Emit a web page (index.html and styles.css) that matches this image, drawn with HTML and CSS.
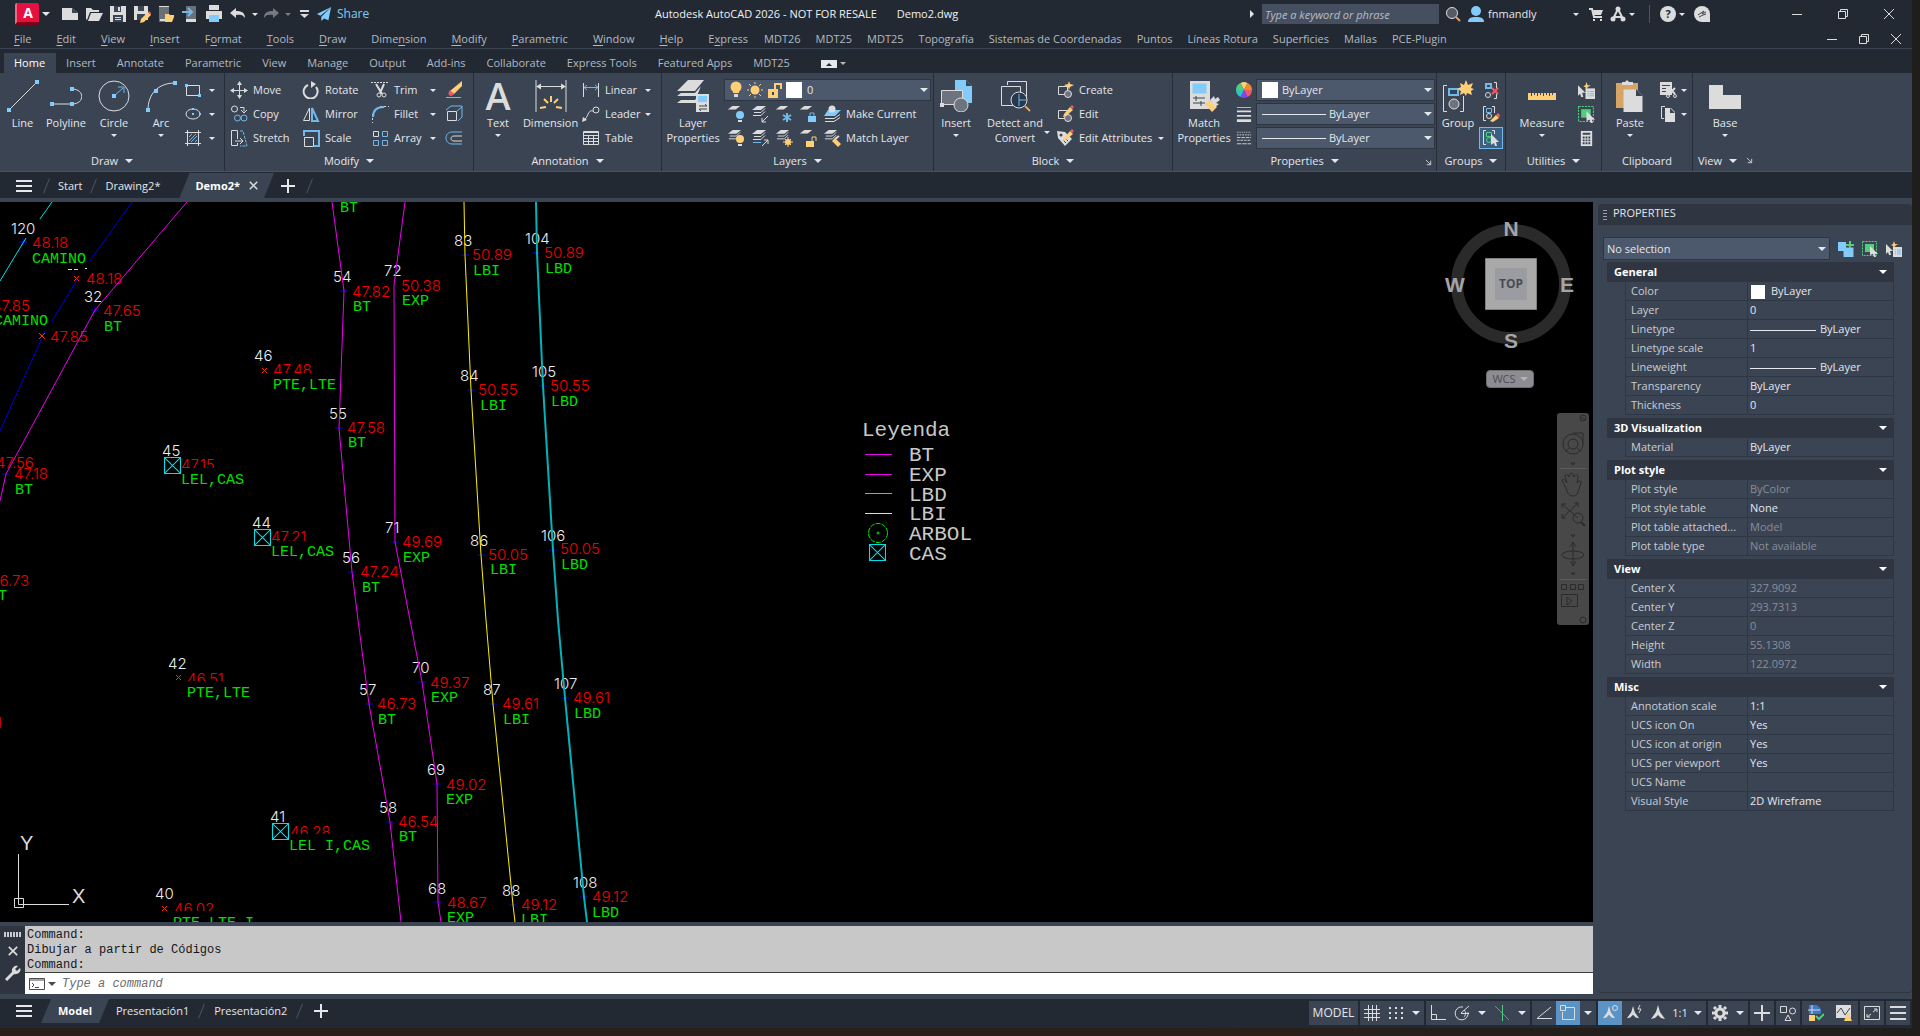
FILE: index.html
```html
<!DOCTYPE html>
<html lang="en">
<head>
    <meta charset="UTF-8">
    <meta name="viewport" content="width=device-width, initial-scale=1.0">
    <title>Autodesk AutoCAD 2026 - Demo2.dwg</title>
    <link rel="stylesheet" href="styles.css">
</head>
<body>
<!-- shared icons -->
<svg class="sprite" aria-hidden="true">
    <symbol id="sheets" viewBox="0 0 16 16"><path class="fw" d="M6 1h9l-5 4H1z"/><path d="M3 7.500h7l4-4M2 10.500h8l4-4"/></symbol>
    <symbol id="sheet" viewBox="0 0 16 16"><path class="fw" d="M6 1h9l-5 4H1z"/></symbol>
    <symbol id="cas" viewBox="0 0 16 16"><path d="M.5.5h15v15H.5zM.5.5l15 15M15.500.5l-15 15"/></symbol>
    <symbol id="qselect" viewBox="0 0 16 16"><path class="fy" d="M8 0l1 3 3 0-3 2-1 3-1-3-2-1 2-1z"/><path class="fw" d="M0 3l7 7H4l1 4-2 0-1-3-2 2z"/><path class="fw" d="M7 6h9v10H7z"/><path class="b" d="M9 9h1m1 0h4M9 11h1m1 0h4M9 13h1m1 0h4"/></symbol>
    <symbol id="gselect" viewBox="0 0 16 16"><path class="g" stroke-dasharray="2 1" d="M.5.5h14v14H.5z"/><path class="fg" d="M3 3h9v8H3z"/><path class="fw" d="M8 5l8 8h-3l1 3-2 0-1-3-3 1z"/></symbol>
    <symbol id="restore" viewBox="0 0 12 12"><path d="M1.500 3.500h7v7h-7zM3.500 3V1.500h7v7H9"/></symbol>
    <symbol id="close" viewBox="0 0 12 12"><path d="M1 1l10 10M11 1L1 11"/></symbol>
    <symbol id="scaleman" viewBox="0 0 16 16"><path class="fw" d="M8 0l2 7 5 7-4-1-3-3-3 3-4 1 5-7z"/></symbol>
</svg>

<div class="app">
    <header class="titlebar">
        <div class="qat">
            <button class="logo" aria-label="Application menu">A</button><i class="caret"></i>
            <button class="qa" aria-label="New"><svg viewBox="0 0 18 18"><path class="fw" d="M1 3h10l6 5v7H1z"/><path class="fd" d="M11 3v5h6z"/></svg></button>
            <button class="qa" aria-label="Open"><svg viewBox="0 0 18 18"><path class="fw" d="M1 14V3h5l2 2h6v2H5l-3 8z"/><path class="fw" d="M6 8h12l-4 8H3z"/></svg></button>
            <button class="qa" aria-label="Save"><svg viewBox="0 0 18 18"><path class="fw" d="M1 1h16v16H1z"/><path class="fd" d="M5 1h7v6H5zM4 10h10v7H4z"/><path class="fw" d="M9 2h2v4H9zM6 12h6v1H6zm0 2h6v1H6z"/></svg></button>
            <button class="qa" aria-label="Save as"><svg viewBox="0 0 18 18"><path class="fw" d="M1 1h14v14H1z"/><path class="fd" d="M5 1h6v5H5zM4 9h8v6H4z"/><path class="fy" d="M8 14l7-7 3 3-7 7-4 1z"/><path class="fr" d="M15 7l1-1 2 2v2z"/></svg></button>
            <button class="qa" aria-label="Open from web"><svg viewBox="0 0 18 18"><path class="fgr" d="M2 1h10v16H2z"/><path class="fw" d="M3 14h6v2H3zM2 1h10v1H2z"/><path class="fy" d="M8 9h4l1 1h4v2l-2 5H8z"/></svg></button>
            <button class="qa" aria-label="Save to web"><svg viewBox="0 0 18 18"><path class="fgr" d="M5 1h10v16H5z"/><path class="fw" d="M5 14h10v3H5z"/><path class="b w2" d="M1 7h9M7 3l4 4-4 4"/></svg></button>
            <button class="qa" aria-label="Plot"><svg viewBox="0 0 18 18"><path class="fw" d="M4 0h10v5H4zM1 6h16v8H1z"/><path class="fb" d="M4 10h10v7H4z"/></svg></button>
            <button class="qa" aria-label="Undo"><svg viewBox="0 0 18 18"><path class="fw" d="M1 8l6-5v3c5 0 9 1 9 7-2-3-4-4-9-3v3z"/></svg></button><i class="caret small"></i>
            <button class="qa dim" aria-label="Redo"><svg viewBox="0 0 18 18"><path class="fw" d="M17 8l-6-5v3c-5 0-9 1-9 7 2-3 4-4 9-3v3z"/></svg></button><i class="caret small"></i>
            <button class="qa" aria-label="Customize"><svg viewBox="0 0 18 18"><path class="fw" d="M5 5h9v2H5zm0 4h9l-4.500 4z"/></svg></button>
            <a class="share" href="#"><svg viewBox="0 0 18 18"><path class="fb" d="M17 1L1 9l4 2zM17 1L6 12v5l3-3 5 2z"/></svg>Share</a>
        </div>
        <div class="window-title"><span>Autodesk AutoCAD 2026 - NOT FOR RESALE</span><span>Demo2.dwg</span></div>
        <div class="infocenter">
            <i class="caret-right"></i>
            <input class="search" type="text" aria-label="Search" placeholder="Type a keyword or phrase">
            <button class="i16" aria-label="Find"><svg viewBox="0 0 16 16"><circle cx="7" cy="7" r="5.500" fill="#555b65"/><path class="w2" stroke="#dba36b" d="M11 11l4 4"/></svg></button>
            <a class="user" href="#"><svg viewBox="0 0 16 16"><circle class="fb" cx="8" cy="5" r="5"/><path class="fb" d="M0 16c0-4 3-5 8-5s8 1 8 5z"/></svg>fnmandly</a><i class="caret small"></i>
            <button class="i16" aria-label="Store"><svg viewBox="0 0 16 16"><path class="w2" d="M1 3h3l2 8h8"/><path class="fw" d="M5 4h10l-2 5H6zM5 13h2v2H5zm7 0h2v2h-2z"/></svg></button>
            <button class="i16" aria-label="Apps"><svg viewBox="0 0 16 16"><path class="w2" d="M8 3L3 13M8 3l5 10M4 11h8"/><circle class="fw" cx="8" cy="3" r="2.500"/><circle class="fw" cx="3" cy="13" r="2.500"/><circle class="fw" cx="13" cy="13" r="2.500"/></svg></button><i class="caret small"></i>
            <span class="sep"></span>
            <button class="help" aria-label="Help">?</button><i class="caret small"></i>
            <button class="i16" aria-label="Assistant"><svg viewBox="0 0 16 16"><path class="fw" d="M8 0a8 8 0 0 1 8 8v8H8A8 8 0 0 1 8 0z"/><path class="dk" d="M4 9l6-4-2 3 4-2M5 11l4-2 3-1"/></svg></button>
        </div>
        <div class="win-buttons">
            <button aria-label="Minimize"><svg viewBox="0 0 12 12"><path d="M1 6.500h10"/></svg></button>
            <button aria-label="Restore"><svg><use href="#restore"/></svg></button>
            <button aria-label="Close"><svg><use href="#close"/></svg></button>
        </div>
    </header>

    <nav class="menubar">
        <div class="menus">
            <a href="#"><u>F</u>ile</a><a href="#"><u>E</u>dit</a><a href="#"><u>V</u>iew</a><a href="#"><u>I</u>nsert</a><a href="#">F<u>o</u>rmat</a><a href="#"><u>T</u>ools</a><a href="#"><u>D</u>raw</a><a href="#">Dime<u>n</u>sion</a><a href="#"><u>M</u>odify</a><a href="#"><u>P</u>arametric</a><a href="#"><u>W</u>indow</a><a href="#"><u>H</u>elp</a><a href="#">E<u>x</u>press</a>
        </div>
        <div class="menus plugins">
            <a href="#">MDT26</a><a href="#">MDT25</a><a href="#">MDT25</a><a href="#">Topografía</a><a href="#">Sistemas de Coordenadas</a><a href="#">Puntos</a><a href="#">Líneas Rotura</a><a href="#">Superficies</a><a href="#">Mallas</a><a href="#">PCE-Plugin</a>
        </div>
        <div class="win-buttons mdi">
            <button aria-label="Minimize drawing"><svg viewBox="0 0 12 12"><path d="M1 6.500h10"/></svg></button>
            <button aria-label="Restore drawing"><svg><use href="#restore"/></svg></button>
            <button aria-label="Close drawing"><svg><use href="#close"/></svg></button>
        </div>
    </nav>

    <nav class="ribbon-tabs">
        <button class="active">Home</button><button>Insert</button><button>Annotate</button><button>Parametric</button><button>View</button><button>Manage</button><button>Output</button><button>Add-ins</button><button>Collaborate</button><button>Express Tools</button><button>Featured Apps</button><button>MDT25</button>
        <button class="ribbon-min" aria-label="Minimize ribbon"></button><i class="caret small"></i>
    </nav>

    <section class="ribbon">
        <div class="panel draw">
            <div class="tools">
                <button class="big"><svg viewBox="0 0 32 32"><path d="M2 30L30 2"/><path class="fb" d="M0 28h4v4H0zM28 0h4v4h-4z"/></svg>Line</button>
                <button class="big"><svg viewBox="0 0 32 32"><path d="M1 24h21c13 0 13-15 0-15"/><path class="fb" d="M0 22h4v4H0zM20 22h4v4h-4zM20 7h4v4h-4z"/></svg>Polyline</button>
                <button class="big"><svg viewBox="0 0 32 32"><circle cx="16" cy="16" r="15"/><path class="b" d="M16 16l9-8M20 7h6v6"/><path class="fb" d="M14 14h4v4h-4z"/></svg>Circle<i class="caret small"></i></button>
                <button class="big"><svg viewBox="0 0 32 32"><path d="M3 30C3 14 13 3 30 3"/><path class="fb" d="M1 28h4v4H1zM28 1h4v4h-4zM9 9h4v4H9z"/></svg>Arc<i class="caret small"></i></button>
                <div class="rows">
                    <button class="tool" aria-label="Rectangle"><svg viewBox="0 0 18 18"><path d="M2.500 4.500h13v10h-13z"/><path class="fb" d="M1 3h3v3H1zM14 13h3v3h-3z"/></svg><i class="caret small"></i></button>
                    <button class="tool" aria-label="Ellipse"><svg viewBox="0 0 18 18"><ellipse cx="9" cy="9" rx="7" ry="5"/><path class="fb" d="M8 8h2v2H8zM15 8h2v2h-2zM8 3h2v2H8z"/></svg><i class="caret small"></i></button>
                    <button class="tool" aria-label="Hatch"><svg viewBox="0 0 18 18"><path d="M3.500 1v16M14.500 1v16M1 3.500h16M1 14.500h16"/><path class="b" d="M5 8l3-3M5 12l7-7M7 13l6-6M11 13l2-2"/></svg><i class="caret small"></i></button>
                </div>
            </div>
            <button class="panel-title">Draw<i class="caret"></i></button>
        </div>

        <div class="panel modify">
            <div class="tools">
                <div class="rows">
                    <button class="tool"><svg viewBox="0 0 18 18"><path d="M9.500 2v14M2 9.500h14"/><path class="fw" d="M7 4l2.500-4L12 4zM7 14l2.500 4 2.500-4zM4 7L0 9.500 4 12zM14 7l4 2.500-4 2.500z"/></svg>Move</button>
                    <button class="tool"><svg viewBox="0 0 18 18"><circle cx="4.500" cy="4" r="3"/><path d="M10 2.500h4v4M11 5l3 3 3-3"/><circle class="b" cx="7.500" cy="13" r="3"/><circle class="b" cx="14" cy="13" r="3"/></svg>Copy</button>
                    <button class="tool"><svg viewBox="0 0 18 18"><path d="M7.500 10V1.500h-6v15h6V14M5 12h7M10 9l3 3-3 3"/><path class="b" d="M10 2h3l4 15h-7" stroke-dasharray="3 1"/></svg>Stretch</button>
                </div>
                <div class="rows">
                    <button class="tool"><svg viewBox="0 0 18 18"><path class="w2" d="M6 4a7 7 0 1 0 8 2"/><path class="fw" d="M9 0l5 3-5 4z"/></svg>Rotate</button>
                    <button class="tool"><svg viewBox="0 0 18 18"><path d="M1.500 15.500h6V3z"/><path class="b w2" d="M10 3v13h6z"/></svg>Mirror</button>
                    <button class="tool"><svg viewBox="0 0 18 18"><path class="b w2" d="M2 7V2h15v15h-5"/><path d="M2.500 8.500h9v9h-9z"/></svg>Scale</button>
                </div>
                <div class="rows">
                    <button class="tool"><svg viewBox="0 0 18 18"><path stroke-dasharray="2 1" d="M0 1.500h18"/><path class="w2" d="M5 3l6 10M13 3L9 12"/><circle cx="8" cy="14" r="2"/><circle cx="13" cy="14" r="2"/></svg>Trim<i class="caret small"></i></button>
                    <button class="tool"><svg viewBox="0 0 18 18"><path stroke-dasharray="2 2" d="M9 1.500h9M1.500 9v9"/><path class="b w2" d="M2 12C2 5 6 2 13 2"/></svg>Fillet<i class="caret small"></i></button>
                    <button class="tool"><svg viewBox="0 0 18 18"><path d="M2.500 2.500h5v5h-5z"/><path class="b" d="M11.500 2.500h5v5h-5zM2.500 11.500h5v5h-5zM11.500 11.500h5v5h-5z"/></svg>Array<i class="caret small"></i></button>
                </div>
                <div class="rows">
                    <button class="tool" aria-label="Erase"><svg viewBox="0 0 18 18"><path class="fy" d="M17 0v5l-8 8-4-3z"/><path class="fr" d="M5 9l4 4c-3 4-8 1-4-4z"/><path class="b" d="M1 16.500h15"/></svg></button>
                    <button class="tool" aria-label="Explode"><svg viewBox="0 0 18 18"><path d="M2.500 6.500h9v9h-9z"/><path class="b" d="M1 5l5-4h11v11l-4 4M12 6l5-4"/></svg></button>
                    <button class="tool" aria-label="Offset"><svg viewBox="0 0 18 18"><path d="M17 7H9c-4 0-4 5 0 5h8"/><path class="b" d="M17 3H7c-8 0-8 12 0 12h10"/></svg></button>
                </div>
            </div>
            <button class="panel-title">Modify<i class="caret"></i></button>
        </div>

        <div class="panel annotation">
            <div class="tools">
                <button class="big"><span class="big-a">A</span>Text<i class="caret small"></i></button>
                <button class="big"><svg viewBox="0 0 32 32"><path d="M1 0v32M31 0v32M2 6.500h28"/><path class="fw" d="M1 6.500l5-3v6zM31 6.500l-5-3v6z"/><path class="y w2" d="M5 28l6-1M9 19l4 4M16 16v6M23 19l-4 4M27 28l-6-1"/></svg>Dimension</button>
                <div class="rows">
                    <button class="tool"><svg viewBox="0 0 18 18"><path d="M1.500 2v14M16.500 2v14"/><path class="b" d="M2 6.500h14M5 4L2 6.500 5 9M13 4l3 2.500L13 9"/></svg>Linear<i class="caret small"></i></button>
                    <button class="tool"><svg viewBox="0 0 18 18"><circle cx="14" cy="5" r="3"/><path d="M11 6c-5-2-5 7-9 9"/><path class="fw" d="M0 17l1-5 4 3z"/></svg>Leader<i class="caret small"></i></button>
                    <button class="tool"><svg viewBox="0 0 18 18"><path d="M1.500 2.500h15v13h-15zM1 3.500h16M1 6.500h16M1 9.500h16M1 12.500h16M6.500 6v10M11.500 6v10"/></svg>Table</button>
                </div>
            </div>
            <button class="panel-title">Annotation<i class="caret"></i></button>
        </div>

        <div class="panel layers">
            <div class="tools">
                <button class="big"><svg viewBox="0 0 32 32"><path class="fw" d="M11 0h16l-9 11H0zM4 13h14l6-7-4 10H0zM4 20h14l3-4v7H0z"/><path class="fw" d="M19 14h13v18H19z"/><path class="fb" d="M21 16h9v6h-9z"/><path class="dk" d="M22 26h8l-2-2M30 29h-8l2 2"/></svg>Layer<br>Properties</button>
                <div class="layer-side">
                    <div class="combo layer-combo">
                        <svg viewBox="0 0 18 18"><circle class="fy" cx="9" cy="6" r="5.500"/><path class="fy" d="M6 9h6v3H6z"/><path class="fw" d="M7 13h4v3H7z"/></svg>
                        <svg viewBox="0 0 18 18"><circle class="fy" cx="9" cy="9" r="4.500"/><path class="y" d="M9 1v2M9 15v2M1 9h2M15 9h2M3 3l2 2M13 13l2 2M15 3l-2 2M3 15l2-2"/></svg>
                        <svg viewBox="0 0 18 18"><path class="fy" d="M3 8h10v9H3z"/><path class="y w2" d="M10 8V3h6v5"/><path class="fd" d="M7 11h2v3H7z"/></svg>
                        <span class="swatch"></span>
                        <select aria-label="Layer"><option>0</option></select>
                    </div>
                    <div class="layer-grid">
                        <button class="tool" aria-label="Layer off"><svg viewBox="0 0 18 18"><use href="#sheet" width="14" height="14"/><circle class="fb" cx="13" cy="10" r="4"/><path class="fw" d="M11 15h4v2h-4z"/></svg></button>
                        <button class="tool" aria-label="Isolate layer"><svg viewBox="0 0 18 18"><use href="#sheets" width="16" height="16"/><path d="M17 11l-6 6M11 13v4h4"/></svg></button>
                        <button class="tool" aria-label="Freeze layer"><svg viewBox="0 0 18 18"><use href="#sheet" width="14" height="14"/><path class="b w2" d="M12 8v9M8 10l8 5M8 15l8-5"/></svg></button>
                        <button class="tool" aria-label="Lock layer"><svg viewBox="0 0 18 18"><use href="#sheet" width="14" height="14"/><path class="fb" d="M9 11h8v6H9z"/><path class="b" d="M11 11V8h4v3"/></svg></button>
                        <button class="tool"><svg viewBox="0 0 18 18"><path class="fb" d="M5 5h13l-6 6H1z"/><circle class="fw" cx="9" cy="4" r="3.500"/><path d="M2 13.500h9l6-4M2 16.500h9l6-4"/></svg>Make Current</button>
                        <button class="tool" aria-label="All layers on"><svg viewBox="0 0 18 18"><use href="#sheets" width="15" height="15"/><circle class="fy" cx="13" cy="10" r="4"/><path class="fw" d="M11 15h4v2h-4z"/></svg></button>
                        <button class="tool" aria-label="Unisolate"><svg viewBox="0 0 18 18"><use href="#sheets" width="16" height="16"/><path class="b" d="M2 13.500h8"/><path d="M11 17l6-6M13 11h4v4"/></svg></button>
                        <button class="tool" aria-label="Thaw layers"><svg viewBox="0 0 18 18"><use href="#sheets" width="15" height="15"/><circle class="fy" cx="13" cy="13" r="3"/><path class="y" d="M13 8v10M8 13h10M10 10l6 6M16 10l-6 6"/></svg></button>
                        <button class="tool" aria-label="Unlock layer"><svg viewBox="0 0 18 18"><use href="#sheet" width="14" height="14"/><path class="fy" d="M7 12h8v6H7z"/><path class="y" d="M13 12V8h4v4"/></svg></button>
                        <button class="tool"><svg viewBox="0 0 18 18"><use href="#sheets" width="15" height="15"/><path class="fy" d="M9 12l3-3 6 6-3 3z"/><path class="w2" d="M12 10l4-3"/></svg>Match Layer</button>
                    </div>
                </div>
            </div>
            <button class="panel-title">Layers<i class="caret"></i></button>
        </div>

        <div class="panel block">
            <div class="tools">
                <button class="big"><svg viewBox="0 0 32 32"><path class="fb" d="M15 0h11l6 6v17H15z"/><path class="fd" d="M26 0v6h6z"/><path fill="#6d7480" d="M1.500 10.500h21v14h-21z"/><circle cx="21" cy="25" r="7" fill="#6d7480"/><path class="fw" d="M0 23h4v4H0z"/></svg>Insert<i class="caret small"></i></button>
                <button class="big detect"><svg viewBox="0 0 32 32"><path d="M8.500 5V1.500h19v19M2.500 6.500h19v19h-19z"/><circle cx="20" cy="20" r="8" fill="#27384d"/><path class="b" d="M20 14v12M20 20h7"/><path class="w2" stroke="#dba36b" d="M26 26l5 5"/></svg>Detect and<br>Convert<i class="caret small"></i></button>
                <div class="rows">
                    <button class="tool"><svg viewBox="0 0 18 18"><path d="M2.500 5.500h9v8h-9z"/><circle cx="12" cy="13" r="3.500" fill="#6d7480"/><path class="fy" d="M13 0l1 3 4 1-4 2-1 3-1-3-4-2 4-1z"/></svg>Create</button>
                    <button class="tool"><svg viewBox="0 0 18 18"><path d="M2.500 5.500h9v8h-9z"/><circle cx="12" cy="13" r="3.500" fill="#6d7480"/><path class="fy" d="M8 9l6-7 3 3-7 6-3 1z"/><path class="fr" d="M14 2l2-2 2 2-2 2z"/></svg>Edit</button>
                    <button class="tool"><svg viewBox="0 0 18 18"><path class="fw" d="M1 2l8 1 7 7-7 7-7-8z"/><circle class="fd" cx="5" cy="6" r="1.500"/><path class="dk" d="M7 11l3 3M9 9l3 3"/><path class="fy" d="M8 9l6-7 3 3-7 6-3 1z"/><path class="fr" d="M14 2l2-2 2 2-2 2z"/></svg>Edit Attributes<i class="caret small"></i></button>
                </div>
            </div>
            <button class="panel-title">Block<i class="caret"></i></button>
        </div>

        <div class="panel props">
            <div class="tools">
                <button class="big"><svg viewBox="0 0 32 32"><path class="fw" d="M2 1h20v28H2z"/><path class="fb" stroke="#2c333f" d="M4.500 3.500h14v10h-14z"/><path class="dk" d="M5 18h12M5 23h12M8 16v5M13 21v5"/><path class="fy" d="M17 24l5-4 7 7-5 5z"/><path class="fw" d="M22 20l4-4 1 3 3-2 2 3-4 3 3 1-4 3z"/></svg>Match<br>Properties</button>
                <div class="prop-combos">
                    <svg viewBox="0 0 18 18"><path class="fy" d="M9 9L5 1a9 9 0 0 1 8 0z"/><path fill="#f58a2c" stroke="none" d="M9 9l4-8a9 9 0 0 1 5 8z"/><path class="fr" d="M9 9h9a9 9 0 0 1-5 8z"/><path fill="#8a3ff0" stroke="none" d="M9 9l4 8a9 9 0 0 1-8 0z"/><path fill="#2cc5c0" stroke="none" d="M9 9l-4 8a9 9 0 0 1-5-8z"/><path class="fg" d="M9 9H0a9 9 0 0 1 5-8z"/></svg>
                    <div class="combo"><span class="swatch"></span><select aria-label="Object color"><option>ByLayer</option></select></div>
                    <svg viewBox="0 0 18 18"><path class="fw" d="M1 1h16v1H1zM1 5h16v2H1zM1 10h16v2H1zM1 15h16v3H1z"/></svg>
                    <div class="combo"><span class="line-sample"></span><select aria-label="Lineweight"><option>ByLayer</option></select></div>
                    <svg viewBox="0 0 18 18"><path stroke-dasharray="1 1" d="M1 2.500h16"/><path stroke-dasharray="2 1" d="M1 5.500h16"/><path stroke-dasharray="4 1" d="M1 8.500h16"/><path stroke-dasharray="3 1" d="M1 11.500h16"/><path stroke-dasharray="5 1" d="M1 15.500h16"/></svg>
                    <div class="combo"><span class="line-sample"></span><select aria-label="Linetype"><option>ByLayer</option></select></div>
                </div>
            </div>
            <button class="panel-title">Properties<i class="caret"></i></button>
            <button class="launcher" aria-label="Properties settings"><svg viewBox="0 0 8 8"><path d="M1 1l5 5M6.500 2v4.500H2"/></svg></button>
        </div>

        <div class="panel groups">
            <div class="tools">
                <button class="big"><svg viewBox="0 0 32 32"><path d="M5 5.500H1.500v26H5M18 31.500h3.500V16"/><path class="b w2" fill="#2c4460" d="M7 9h9v6H7z"/><circle cx="12" cy="24" r="5" fill="#6d7480"/><path class="fy" d="M24 0l2 5 5-2-2 5 3 1-3 2 1 4-5-2-1 3-2-3-4 2 1-4-4-2 4-2-1-4 4 2z"/></svg>Group</button>
                <div class="rows">
                    <button class="tool" aria-label="Ungroup"><svg viewBox="0 0 18 18"><path class="b w2" d="M4 3h5v4H4z"/><circle cx="6" cy="14" r="2.500"/><path d="M12 1.500h2.500v6M14.500 13v4.500H12"/><path class="r w2" d="M10 7l6 6M16 7l-6 6"/></svg></button>
                    <button class="tool" aria-label="Group edit"><svg viewBox="0 0 18 18"><path d="M4 1.500H1.500v14H4M10 1.500h2.500V8"/><path class="b" d="M4.500 3.500h5v4h-5z"/><circle cx="7" cy="11" r="2.500"/><path class="fy" d="M8 16l6-6 3 3-6 4z"/><path class="fr" d="M14 10l2-2 2 2-1 3z"/></svg></button>
                    <button class="tool on" aria-label="Group selection"><svg viewBox="0 0 18 18"><path d="M4 1.500H1.500v14H4M10 1.500h2.500V5"/><path class="g" d="M4.500 3.500h5v4h-5z"/><circle class="g" cx="7" cy="11" r="2.500"/><path class="fw" d="M9 5l8 8h-3l1 4-2 0-1-3-3 2z"/></svg></button>
                </div>
            </div>
            <button class="panel-title">Groups<i class="caret"></i></button>
        </div>

        <div class="panel utilities">
            <div class="tools">
                <button class="big"><svg viewBox="0 0 32 32"><path class="fy" d="M2 13h28v7H2z"/><path class="dk" d="M5.500 13v3M8.500 13v2M11.500 13v3M14.500 13v2M17.500 13v3M20.500 13v2M23.500 13v3M26.500 13v2"/></svg>Measure<i class="caret small"></i></button>
                <div class="rows">
                    <button class="tool" aria-label="Quick select"><svg><use href="#qselect"/></svg></button>
                    <button class="tool" aria-label="Select all"><svg><use href="#gselect"/></svg></button>
                    <button class="tool" aria-label="Calculator"><svg viewBox="0 0 18 18"><path class="fw" d="M3 1h12v16H3z"/><path class="fd" d="M5 3h8v2H5z"/><path class="dk w2" stroke-dasharray="2 1" d="M5 8h8M5 11h8M5 14h8"/></svg></button>
                </div>
            </div>
            <button class="panel-title">Utilities<i class="caret"></i></button>
        </div>

        <div class="panel clipboard">
            <div class="tools">
                <button class="big"><svg viewBox="0 0 32 32"><path fill="#d6a465" stroke="none" d="M2 3h22v25H2z"/><path class="fw" d="M8 2h3l2-2 2 2h4v3H8z"/><path class="fw" stroke="#3b4453" d="M9.500 9.500h13l6 6v17h-19z"/><path class="fd" d="M22 9v7h7z"/></svg>Paste<i class="caret small"></i></button>
                <div class="rows">
                    <button class="tool" aria-label="Cut"><svg viewBox="0 0 18 18"><path class="fw" d="M1 1h12v13H1z"/><path class="dk" d="M3 4.500h8M3 7.500h4M3 10.500h4"/><path class="w2" d="M9 6l7 7M16 7l-7 7"/><circle cx="9" cy="15" r="1.500"/><circle cx="16" cy="15" r="1.500"/></svg><i class="caret small"></i></button>
                    <button class="tool" aria-label="Copy clip"><svg viewBox="0 0 18 18"><path d="M6 1.500H2.500v12H5"/><path class="fw" d="M6 3h6l4 4v10H6z"/><path class="fd" d="M11 3v5h5z"/></svg><i class="caret small"></i></button>
                </div>
            </div>
            <div class="panel-title">Clipboard</div>
        </div>

        <div class="panel view">
            <div class="tools">
                <button class="big"><svg viewBox="0 0 32 32"><path class="fw" d="M0 5h14v10h18v14H0z"/></svg>Base<i class="caret small"></i></button>
            </div>
            <div class="view-foot"><button class="panel-title">View<i class="caret"></i></button>
            <button aria-label="View settings"><svg viewBox="0 0 8 8"><path d="M1 1l5 5M6.500 2v4.500H2"/></svg></button></div>
        </div>
    </section>

    <nav class="file-tabs">
        <button class="burger" aria-label="Drawing list"></button>
        <i class="slash"></i><button class="tab">Start</button>
        <i class="slash"></i><button class="tab">Drawing2*</button>
        <button class="tab current">Demo2*<svg><use href="#close"/></svg></button>
        <button class="plus" aria-label="New drawing"></button><i class="slash"></i>
    </nav>

    <main class="workspace">
        <div class="editor">
            <div class="canvas">
                <svg class="drawing">
                    <!-- survey drawing, y axis starts below the ribbon -->
                    <g transform="translate(0 -202)">
                        <g class="nums">
                            <text x="11" y="234">120</text><text x="84" y="302">32</text><text x="254" y="361">46</text><text x="162" y="456">45</text><text x="252" y="528">44</text><text x="168" y="669">42</text><text x="270" y="822">41</text><text x="155" y="899">40</text>
                            <text x="454" y="246">83</text><text x="525" y="244">104</text><text x="333" y="282">54</text><text x="384" y="276">72</text><text x="460" y="381">84</text><text x="532" y="377">105</text><text x="329" y="419">55</text><text x="385" y="533">71</text><text x="470" y="546">86</text><text x="541" y="541">106</text><text x="342" y="563">56</text>
                            <text x="359" y="695">57</text><text x="412" y="673">70</text><text x="483" y="695">87</text><text x="554" y="689">107</text><text x="427" y="775">69</text><text x="379" y="813">58</text><text x="428" y="894">68</text><text x="502" y="896">88</text><text x="573" y="888">108</text>
                        </g>
                        <path class="tick" d="M68 269.500h4m2 0h4m7-1h2"/>
                        <g class="elev">
                            <text x="32" y="248">48.18</text><text x="86" y="284">48.18</text><text x="-8" y="311">47.85</text><text x="103" y="316">47.65</text><text x="50" y="342">47.85</text><text x="-4" y="468">47.56</text><text x="14" y="479">47.18</text><text x="273" y="375">47.48</text><text x="181" y="470">47.15</text><text x="271" y="542">47.21</text><text x="-10" y="586">46.73</text><text x="-35" y="728">46.81</text><text x="187" y="684">46.51</text><text x="290" y="837">46.28</text><text x="174" y="914">46.02</text>
                            <text x="472" y="260">50.89</text><text x="544" y="258">50.89</text><text x="352" y="297">47.82</text><text x="401" y="291">50.38</text><text x="478" y="395">50.55</text><text x="550" y="391">50.55</text><text x="347" y="433">47.58</text><text x="402" y="547">49.69</text><text x="488" y="560">50.05</text><text x="560" y="554">50.05</text><text x="360" y="577">47.24</text>
                            <text x="430" y="688">49.37</text><text x="377" y="709">46.73</text><text x="502" y="709">49.61</text><text x="573" y="703">49.61</text><text x="446" y="790">49.02</text><text x="398" y="827">46.54</text><text x="447" y="908">48.67</text><text x="521" y="910">49.12</text><text x="592" y="902">49.12</text>
                        </g>
                        <!-- label masks -->
                        <path class="mask" d="M273 373h64v18h-64zM181 468h64v18h-64zM271 541h64v18h-64zM187 681h64v18h-64zM289 834h82v18h-82zM174 911h82v18h-82z"/>
                        <g class="code">
                            <text x="32" y="263">CAMINO</text><text x="-6" y="325">CAMINO</text><text x="104" y="331">BT</text><text x="15" y="494">BT</text><text x="273" y="389">PTE,LTE</text><text x="181" y="484">LEL,CAS</text><text x="271" y="556">LEL,CAS</text><text x="-11" y="600">BT</text><text x="187" y="697">PTE,LTE</text><text x="289" y="850">LEL I,CAS</text><text x="173" y="927">PTE,LTE I</text><text x="340" y="212">BT</text>
                            <text x="473" y="275">LBI</text><text x="545" y="273">LBD</text><text x="353" y="311">BT</text><text x="402" y="305">EXP</text><text x="480" y="410">LBI</text><text x="551" y="406">LBD</text><text x="348" y="447">BT</text><text x="403" y="562">EXP</text><text x="490" y="574">LBI</text><text x="561" y="569">LBD</text><text x="362" y="592">BT</text>
                            <text x="431" y="702">EXP</text><text x="378" y="724">BT</text><text x="503" y="724">LBI</text><text x="574" y="718">LBD</text><text x="446" y="804">EXP</text><text x="399" y="841">BT</text><text x="447" y="922">EXP</text><text x="521" y="924">LBI</text><text x="592" y="917">LBD</text>
                        </g>
                        <g class="blue">
                            <path d="M132 202L90 261M80 275L52 321M45 331L0 431"/>
                            <path d="M19 242h8M23 238v8M91 310h8M95 306v8M2 474h8M340 291h8M335 428h8M391 542h8M348 572h8M365 704h8M418 682h8M433 784h8M386 822h8M434 902h8M461 255h8M467 390h8M477 555h8M489 704h8M509 905h8M532 253h8M539 386h8M549 550h8M561 698h8M580 897h8"/>
                        </g>
                        <path class="cyan" d="M52 202L40 219M26 238L0 281"/>
                        <g class="magenta">
                            <path d="M187 202L95 310 6 474 0 501"/>
                            <path d="M332 202L344 291 339 428 352 572 358 620 369 704 390 822 401 922"/>
                            <path d="M405 202L394 285 395 542 410 620 422 682 437 784 438 902 441 922"/>
                            <path d="M865 454.500h27M865 474.500h27"/>
                        </g>
                        <path class="yellow" d="M464 202L465 255 471 390 481 555 486 620 493 704 513 905 515 922M865 513.500h27"/>
                        <path class="cyan main" d="M536 202L537 253 543 386 553 550 558 620 565 698 584 897 587 922"/>
                        <path class="cyan" d="M865 493.500h27"/>
                        <path class="red" d="M74 276l5 5M79 276l-5 5M39 333l6 6M45 333l-6 6M262 368l5 5M267 368l-5 5M176 675l5 5M181 675l-5 5M162 906l5 5M167 906l-5 5"/>
                        <g class="cyan">
                            <use href="#cas" x="164" y="457" width="17" height="17"/><use href="#cas" x="254" y="529" width="17" height="17"/><use href="#cas" x="272" y="823" width="17" height="17"/><use href="#cas" x="869" y="544" width="17" height="17"/>
                        </g>
                        <g class="legend">
                            <text x="862" y="436">Leyenda</text><text x="909" y="461">BT</text><text x="909" y="481">EXP</text><text x="909" y="501">LBD</text><text x="909" y="520">LBI</text><text x="909" y="540">ARBOL</text><text x="909" y="560">CAS</text>
                        </g>
                        <circle class="tree" cx="878" cy="533" r="9.500" stroke-dasharray="5 1"/><circle class="tree" cx="878" cy="533" r="1"/>
                        <g class="ucs">
                            <path d="M18.500 854v50.500H69M14.500 898.500h9v9h-9z"/>
                            <text x="20" y="850">Y</text><text x="72" y="903">X</text>
                        </g>
                    </g>
                </svg>

                <svg class="viewcube" viewBox="0 0 134 134">
                    <circle class="ring" cx="67" cy="67" r="54"/>
                    <path class="face" d="M41.500 41.500h51v51h-51z"/><path class="face-in" d="M51 51h32v32H51z"/>
                    <text class="top" x="67" y="71">TOP</text>
                    <g class="compass"><text x="67" y="19">N</text><text x="11" y="75">W</text><text x="123" y="75">E</text><text x="67" y="131">S</text></g>
                </svg>
                <button class="wcs">WCS<i class="caret"></i></button>

                <svg class="navbar" viewBox="0 0 32 212">
                    <g class="nav-dark">
                        <circle cx="26" cy="5" r="3"/><circle cx="16" cy="31" r="10"/><circle cx="16" cy="31" r="5"/><path d="M26 31V20H16M9 38l4-4M23 38l-4-4M24 4l4 3"/>
                        <path d="M9 75l-4-7c0-3 3-1 5 2l-2-7c1-3 3-1 4 1l1-3c1-2 3 0 3 0l1 3c2-4 4-2 4 0l-1 6c2-3 5-3 4 0l-3 9c-1 5-10 7-12-4z"/>
                        <path d="M5 91l16 14M5 105l16-15M5 95v-4h4M17 90h4v4M5 101v4h4"/><circle cx="21" cy="105" r="5"/><path class="w2" d="M24 109l4 4"/>
                        <path d="M16 130v22M13 134l3-5 3 5M13 148l3 5 3-5"/><ellipse cx="16" cy="142" rx="11" ry="4"/>
                        <path d="M4.500 171.500h5v5h-5zM13.500 171.500h5v5h-5zM21.500 171.500h5v5h-5zM4.500 181.500h16v12h-16z"/><path d="M10 184l5 4-5 4z"/><circle cx="26" cy="207" r="3"/>
                        <path d="M14 50h4l-2 2zM14 122h4l-2 2zM14 160h4l-2 2z"/>
                    </g>
                    <path class="nav-line" d="M3 55.500h26M3 166.500h26"/>
                </svg>
            </div>

            <div class="command">
                <div class="cmd-side">
                    <span class="grip"></span>
                    <button aria-label="Close command line"><svg><use href="#close"/></svg></button>
                    <button aria-label="Customize command line"><svg viewBox="0 0 16 16"><path class="w3" d="M1 15L9 7"/><path class="fw" d="M7 7c-1-4 3-7 6-6l-3 3 2 2 3-3c2 4-3 7-6 6z"/></svg></button>
                </div>
                <div class="cmd-main">
                    <div class="history">Command:<br>Dibujar a partir de Códigos<br>Command:</div>
                    <div class="prompt">
                        <svg viewBox="0 0 16 12"><path d="M.5.5h15v11H.5zM1 2h14M3 5l2 2-2 2M6 9.500h4"/></svg><i class="caret"></i>
                        <input type="text" aria-label="Command" placeholder="Type a command">
                    </div>
                </div>
            </div>
        </div>

        <aside class="palette">
            <h2 class="palette-title">PROPERTIES</h2>
            <div class="palette-tools">
                <div class="combo"><select aria-label="Selection"><option>No selection</option></select></div>
                <button aria-label="Toggle pickadd"><svg viewBox="0 0 16 16"><path class="fb" d="M0 1h8v9H0z"/><path class="fb" stroke="#3b4453" d="M5.500 6.500h10v10h-10z"/><path class="g w2" d="M12 0v7M8 4h8"/></svg></button>
                <button aria-label="Select objects"><svg><use href="#gselect"/></svg></button>
                <button aria-label="Quick select objects"><svg><use href="#qselect"/></svg></button>
            </div>
            <div class="props-list">
                <button class="cat">General<i class="caret"></i></button>
                <table>
                    <tr><th>Color</th><td><span class="chip"></span>ByLayer</td></tr>
                    <tr><th>Layer</th><td>0</td></tr>
                    <tr><th>Linetype</th><td><span class="line-sample"></span>ByLayer</td></tr>
                    <tr><th>Linetype scale</th><td>1</td></tr>
                    <tr><th>Lineweight</th><td><span class="line-sample"></span>ByLayer</td></tr>
                    <tr><th>Transparency</th><td>ByLayer</td></tr>
                    <tr><th>Thickness</th><td>0</td></tr>
                </table>
                <button class="cat">3D Visualization<i class="caret"></i></button>
                <table>
                    <tr><th>Material</th><td>ByLayer</td></tr>
                </table>
                <button class="cat">Plot style<i class="caret"></i></button>
                <table>
                    <tr><th>Plot style</th><td class="off">ByColor</td></tr>
                    <tr><th>Plot style table</th><td>None</td></tr>
                    <tr><th>Plot table attached...</th><td class="off">Model</td></tr>
                    <tr><th>Plot table type</th><td class="off">Not available</td></tr>
                </table>
                <button class="cat">View<i class="caret"></i></button>
                <table>
                    <tr><th>Center X</th><td class="off">327.9092</td></tr>
                    <tr><th>Center Y</th><td class="off">293.7313</td></tr>
                    <tr><th>Center Z</th><td class="off">0</td></tr>
                    <tr><th>Height</th><td class="off">55.1308</td></tr>
                    <tr><th>Width</th><td class="off">122.0972</td></tr>
                </table>
                <button class="cat">Misc<i class="caret"></i></button>
                <table>
                    <tr><th>Annotation scale</th><td>1:1</td></tr>
                    <tr><th>UCS icon On</th><td>Yes</td></tr>
                    <tr><th>UCS icon at origin</th><td>Yes</td></tr>
                    <tr><th>UCS per viewport</th><td>Yes</td></tr>
                    <tr><th>UCS Name</th><td></td></tr>
                    <tr><th>Visual Style</th><td>2D Wireframe</td></tr>
                </table>
            </div>
        </aside>
    </main>

    <footer class="statusbar">
        <nav class="layout-tabs">
            <button class="burger" aria-label="Layout list"></button>
            <button class="tab current">Model</button>
            <button class="tab">Presentación1</button><i class="slash"></i>
            <button class="tab">Presentación2</button><i class="slash"></i>
            <button class="plus" aria-label="New layout"></button>
        </nav>
        <div class="status-group"><button class="wide">MODEL</button></div>
        <div class="status-group">
            <button aria-label="Grid"><svg viewBox="0 0 16 16"><path d="M4.500 0v16M8.500 0v16M12.500 0v16M0 4.500h16M0 8.500h16M0 12.500h16"/></svg></button>
            <button aria-label="Snap"><svg viewBox="0 0 16 16"><path class="w2" stroke-dasharray="2 4" d="M1 3h14M1 8h14M1 13h14"/></svg></button><i class="caret"></i>
        </div>
        <div class="status-group">
            <button aria-label="Ortho"><svg viewBox="0 0 16 16"><path d="M1.500 0v14.500H16M1 9.500h5.500V14"/></svg></button>
            <button aria-label="Polar"><svg viewBox="0 0 16 16"><path d="M14 7A6.500 6.500 0 1 1 9 2M7 8.500h8M7 8l8-7M10 5c3 2 1 6 0 7"/></svg></button><i class="caret"></i>
            <button aria-label="Isodraft"><svg viewBox="0 0 16 16"><path class="r" d="M1 1l14 14"/><path class="g" d="M8.500 0v16"/></svg></button><i class="caret"></i>
        </div>
        <div class="status-group">
            <button aria-label="Object snap tracking"><svg viewBox="0 0 16 16"><path d="M15 2L1 13.500h15"/></svg></button>
            <button class="on" aria-label="Object snap"><svg viewBox="0 0 16 16"><path d="M5 2.500h9.500v12H2.500V7M.5.5h5v5h-5z"/></svg></button><i class="caret"></i>
        </div>
        <div class="status-group">
            <button class="on" aria-label="Annotation visibility"><svg viewBox="0 0 16 16"><use href="#scaleman" width="14" height="16"/><circle cx="13" cy="3" r="2.500"/></svg></button>
            <button aria-label="Auto scale"><svg viewBox="0 0 16 16"><use href="#scaleman" width="14" height="16"/><path d="M14 0l-2 4h3l-2 4"/></svg></button>
            <button aria-label="Annotation scale"><svg><use href="#scaleman"/></svg></button>
            <button class="scale">1:1</button><i class="caret"></i>
        </div>
        <div class="status-group">
            <button aria-label="Workspace"><svg viewBox="0 0 16 16"><circle cx="8" cy="8" r="4" class="w3"/><path class="w3" d="M8 0v3M8 13v3M0 8h3M13 8h3M2 2l2 2M12 12l2 2M14 2l-2 2M2 14l2-2"/></svg></button><i class="caret"></i>
        </div>
        <div class="status-group"><button aria-label="Annotation monitor"><svg viewBox="0 0 16 16"><path class="w2" d="M8 0v16M0 8h16"/></svg></button></div>
        <div class="status-group"><button aria-label="Isolate objects"><svg viewBox="0 0 16 16"><path d="M.5 1.500h6v6h-6zM8 10l3 5.500H5z"/><circle cx="12.500" cy="6" r="3"/></svg></button></div>
        <div class="status-group spaced">
            <button aria-label="Hardware acceleration"><svg viewBox="0 0 16 16"><path fill="#3f78c8" stroke="none" d="M1 0h8l4 4v5H1z"/><path class="fy" d="M1 10h6v6H1z"/><path d="M0 5h12M4 0v9"/><path class="g w2" d="M8 11l3 3 5-5"/></svg></button>
            <button aria-label="Graphics performance"><svg viewBox="0 0 16 16"><path class="fw" d="M0 0h15v13H0z"/><path class="dk" d="M1 8l4-5 4 7 5-7"/><path class="fy" d="M12 7l4 9H8z"/></svg></button>
        </div>
        <div class="status-group"><button aria-label="Clean screen"><svg viewBox="0 0 16 16"><path d="M.5 1.500h15v13H.5zM9 7l4-3M10 4h3v3M7 9l-4 3M3 9v3h3"/></svg></button></div>
        <div class="status-group"><button aria-label="Customization"><svg viewBox="0 0 16 16"><path class="w2" d="M0 2h16M0 8h16M0 14h16"/></svg></button></div>
    </footer>
</div>
</body>
</html>
```

FILE: styles.css
```css
* {
    box-sizing: border-box;
}

body {
    margin: 0;
    height: 100vh;
    padding: 0 8px 8px 0;
    background: linear-gradient(to right, #2b2018 60%, #201e1c);
    font-family: "Open Sans", "Noto Sans", sans-serif;
    font-size: 11px;
    line-height: 16px;
    color: #e4e7eb;
    overflow: hidden;
}

button, input, select {
    font: inherit;
    color: inherit;
    background: none;
    border: none;
    border-radius: 0;
    padding: 0;
    margin: 0;
    outline: none;
}

a {
    color: inherit;
    text-decoration: none;
}

svg {
    fill: none;
    stroke: #dcdcdc;
    stroke-width: 1;
    flex: none;
}

.sprite { position: absolute; width: 0; height: 0; }

/* icon colours */
.fw { fill: #dcdcdc; stroke: none; }
.fd { fill: #3b4453; stroke: none; }
.fgr { fill: #6b6f76; stroke: none; }
.fb { fill: #83cbfa; stroke: none; }
.fy { fill: #ffcf77; stroke: none; }
.fr { fill: #ee5a67; stroke: none; }
.fg { fill: #4fcf7c; stroke: none; }
.b { stroke: #72b9ea; }
.y { stroke: #ffcf77; }
.r { stroke: #ee5a67; }
.g { stroke: #4fcf7c; }
.dk { stroke: #3b4453; }
.w2 { stroke-width: 2; }
.w3 { stroke-width: 3; }

.caret {
    flex: none;
    display: inline-block;
    border: 4px solid transparent;
    border-top-color: currentColor;
    border-bottom: none;
}

.caret.small {
    border-width: 3px 3px 0;
}

.caret-right {
    border: 4px solid transparent;
    border-left-color: #e4e7eb;
    border-right: none;
    margin-right: 8px;
}

.app {
    display: flex;
    flex-direction: column;
    height: 100%;
    background: #222933;
}

/* title bar */
.titlebar {
    display: grid;
    grid-template-columns: 655px 1fr auto auto;
    align-items: center;
    height: 29px;
    padding-bottom: 1px;
}

.qat {
    display: flex;
    align-items: center;
    padding-left: 15px;
}

.logo {
    width: 24px;
    height: 22px;
    margin-right: 3px;
    background: #e5103f;
    border-bottom: 3px solid #7d0016;
    border-left: 2px solid #ee6a80;
    border-radius: 2px;
    color: #fff;
    font-size: 14px;
    font-weight: bold;
    line-height: 18px;
}

.qa {
    width: 24px;
    height: 22px;
    display: flex;
    align-items: center;
    justify-content: center;
}

.qat .caret + .qa { margin-left: 8px; }
.qat .caret.small + .qa { margin-left: 1px; }
.qat .qa + .caret { margin-left: 2px; }
.dim, .dim + .caret { opacity: .45; }
.qa svg { width: 18px; height: 18px; }

.share {
    display: flex;
    align-items: center;
    gap: 5px;
    color: #83cbfa;
    font-size: 12px;
}

.share svg { width: 16px; height: 16px; }

.window-title {
    display: flex;
    gap: 20px;
    color: #f0f2f4;
    white-space: nowrap;
}

.infocenter {
    display: flex;
    align-items: center;
    padding-right: 64px;
}

.search {
    width: 177px;
    height: 20px;
    padding: 0 3px;
    background: #464f60;
    font-style: italic;
}

.search::placeholder { color: #b9bec7; }
.i16 { width: 16px; height: 16px; margin-left: 6px; }
.i16 svg { width: 16px; height: 16px; display: block; }

.user {
    display: flex;
    gap: 4px;
    width: 102px;
    margin-left: 7px;
}

.user svg { width: 16px; height: 16px; }
.infocenter .caret { margin: 0 3px; }

.sep {
    width: 1px;
    height: 18px;
    margin: 0 10px 0 11px;
    background: #4c5461;
}

.help {
    width: 16px;
    height: 16px;
    border-radius: 8px;
    background: #dcdcdc;
    color: #222933;
    font-weight: bold;
    line-height: 16px;
}

.win-buttons { display: flex; }

.win-buttons button {
    width: 46px;
    height: 20px;
    display: flex;
    align-items: center;
    justify-content: center;
}

.win-buttons svg { width: 12px; height: 12px; }
.win-buttons.mdi { margin-left: auto; }
.win-buttons.mdi button { width: 32px; }

/* menu bar */
.menubar {
    display: flex;
    align-items: center;
    height: 20px;
    padding-left: 14px;
    color: #b4b9c0;
    border-bottom: 1px solid #3b4453;
}

.menus {
    display: flex;
    gap: 25px;
    white-space: nowrap;
}

.menus.plugins {
    gap: 15px;
    margin-left: 16px;
}

.menus u { text-underline-offset: 2px; }

/* ribbon */
.ribbon-tabs {
    display: flex;
    align-items: center;
    height: 24px;
    padding: 4px 0 0 4px;
    color: #b4b9c0;
}

.ribbon-tabs button {
    height: 20px;
    padding: 0 11px 0 10px;
    white-space: nowrap;
}

.ribbon-tabs .active {
    background: #3b4453;
    color: #fff;
}

.ribbon-tabs .ribbon-min {
    width: 16px;
    height: 8px;
    padding: 0;
    margin: 2px 3px 0 20px;
    background: #e4e7eb;
    display: flex;
    align-items: center;
    justify-content: center;
}

.ribbon-min::after {
    content: "";
    border: 3px solid transparent;
    border-bottom-color: #222933;
    border-top: none;
}

.ribbon {
    display: flex;
    height: 99px;
    background: #3b4453;
    border-bottom: 1px solid #4a5362;
}

.panel {
    position: relative;
    display: flex;
    flex-direction: column;
    flex: none;
    padding-top: 5px;
    border-right: 1px solid #262d38;
}

.tools {
    display: grid;
    height: 72px;
}

.draw { width: 225px; }
.modify { width: 249px; }
.annotation { width: 188px; }
.layers { width: 272px; }
.block { width: 239px; }
.props { width: 264px; }
.groups { width: 69px; }
.utilities { width: 96px; }
.clipboard { width: 91px; }
.panel.view { flex: 1; border: none; }

.draw .tools { grid-template-columns: 45px 42px 54px 40px 1fr; }
.modify .tools { grid-template-columns: 72px 69px 74px 20px; padding-left: 5px; }
.annotation .tools { grid-template-columns: 48px 57px 80px; }
.layers .tools { grid-template-columns: 62px 1fr; }
.block .tools { grid-template-columns: 44px 74px 1fr; }
.props .tools { grid-template-columns: 62px 1fr; }
.groups .tools { grid-template-columns: 42px 24px; }
.utilities .tools { grid-template-columns: 72px 1fr; }
.clipboard .tools { grid-template-columns: 56px 1fr; }
.view .tools { grid-template-columns: 64px; }

.big {
    position: relative;
    display: flex;
    flex-direction: column;
    align-items: center;
    justify-content: flex-start;
    padding-top: 2px;
    line-height: 15px;
    white-space: nowrap;
}

.big svg {
    width: 32px;
    height: 32px;
    margin-bottom: 3px;
}

.big .caret { margin-top: 4px; }

.detect .caret {
    position: absolute;
    right: 2px;
    top: 49px;
}

.big-a {
    height: 35px;
    font-size: 38px;
    font-weight: 600;
    line-height: 31px;
    color: #dcdcdc;
}

.rows {
    display: grid;
    grid-template-rows: 24px 24px 24px;
}

.tool {
    display: flex;
    align-items: center;
    gap: 5px;
    white-space: nowrap;
}

.tool svg { width: 18px; height: 18px; }
.tool .caret { margin-left: auto; margin-right: 9px; }
.draw .rows, .annotation .rows { padding-left: 3px; }
.draw .tool .caret { margin-left: 2px; }
.block .rows { padding-left: 4px; }
.block .tool .caret { margin-right: 8px; }
.groups .tool { justify-content: center; }
.clipboard .tool .caret { margin: 0 0 0 -1px; }
.utilities .tool svg { width: 17px; height: 17px; }
.clipboard .tool { margin-left: 1px; }

.tool.on {
    height: 22px;
    margin-top: 1px;
    border: 1px solid #72b9ea;
    background: #3f5f82;
}

.panel-title {
    display: flex;
    align-items: center;
    justify-content: center;
    gap: 7px;
    height: 21px;
}

.launcher {
    position: absolute;
    right: 4px;
    bottom: 5px;
    height: 8px;
}

.launcher svg, .view-foot svg { width: 7px; height: 7px; display: block; }

.view-foot {
    display: flex;
    align-items: center;
    gap: 9px;
    padding-left: 5px;
}

.combo {
    position: relative;
    display: flex;
    align-items: center;
    height: 22px;
    padding-left: 5px;
    background: #4c586b;
    border: 1px solid #2d3541;
}

.combo::after {
    content: "";
    position: absolute;
    right: 2px;
    border: 4px solid transparent;
    border-top-color: #e4e7eb;
    border-bottom: none;
}

.combo select {
    flex: 1;
    height: 20px;
    appearance: none;
}

.swatch {
    width: 16px;
    height: 16px;
    margin-right: 4px;
    background: #fff;
}

.line-sample {
    display: inline-block;
    width: 64px;
    height: 1px;
    margin-right: 3px;
    background: #e4e7eb;
}

.layer-side {
    display: grid;
    grid-template-rows: 24px 48px;
    padding-right: 2px;
}

.layer-combo { margin: 1px 0; gap: 1px; padding-left: 2px; }
.layer-combo svg { width: 18px; height: 18px; }
.layer-combo .swatch { margin-left: 2px; }

.layer-grid {
    display: grid;
    grid-template: 24px 24px / 24px 24px 24px 24px 1fr;
    padding-left: 3px;
}

.prop-combos {
    display: grid;
    grid-template-columns: 18px 1fr;
    grid-auto-rows: 24px;
    align-items: center;
    gap: 0 2px;
    padding: 0 1px;
}

.prop-combos svg { width: 16px; height: 16px; }

/* drawing tabs */
.file-tabs, .layout-tabs {
    display: flex;
    align-items: center;
}

.file-tabs {
    height: 26px;
    padding: 1px 0 0 16px;
}

.burger {
    width: 16px;
    height: 12px;
    border-top: 2px solid #e4e7eb;
    border-bottom: 2px solid #e4e7eb;
    background: linear-gradient(#e4e7eb, #e4e7eb) center / 100% 2px no-repeat;
}

.slash {
    width: 1px;
    height: 16px;
    background: #4c5461;
    transform: rotate(22deg);
}

.tab { padding: 0 11px; }
.burger + .slash { margin-left: 14px; }

.tab.current {
    align-self: stretch;
    display: flex;
    align-items: center;
    gap: 9px;
    padding: 0 16px;
    background: #3b4453;
    color: #fff;
    font-weight: bold;
    clip-path: polygon(10px 0, 100% 0, calc(100% - 10px) 100%, 0 100%);
}

.file-tabs .tab.current { margin-left: 8px; }
.tab.current svg { width: 9px; height: 9px; stroke-width: 2; }

.plus {
    width: 14px;
    height: 14px;
    margin: 0 14px 0 7px;
    background:
        linear-gradient(#e4e7eb, #e4e7eb) center / 100% 2px no-repeat,
        linear-gradient(#e4e7eb, #e4e7eb) center / 2px 100% no-repeat;
}

/* workspace */
.workspace {
    flex: 1;
    min-height: 0;
    display: grid;
    grid-template-columns: 1fr 318px;
    background: #3b4453;
}

.editor {
    display: flex;
    flex-direction: column;
    min-height: 0;
    padding: 4px 1px 5px 0;
}

.canvas {
    position: relative;
    flex: 1;
    min-height: 0;
    background: #000;
    overflow: hidden;
}

.drawing {
    display: block;
    width: 100%;
    height: 100%;
}

.drawing text { stroke: none; }
.nums, .elev { font-family: "Inter", "Liberation Sans", sans-serif; font-size: 15px; font-weight: 300; }
.nums { fill: #ececec; }
.elev { fill: #f00000; }
.code { font-family: "Liberation Mono", monospace; font-size: 15px; fill: #00e000; }
.legend { font-family: "Liberation Mono", monospace; font-size: 21px; fill: #c8c8c8; }
.ucs text { font-family: "Liberation Sans", sans-serif; font-size: 20px; fill: #dcdcdc; }
.mask { fill: #000; stroke: none; }
.blue { stroke: #0000dc; }
.cyan { stroke: #00e0e8; }
.cyan.main { stroke-width: 2; stroke: #00b4bc; }
.magenta { stroke: #f000f0; }
.yellow { stroke: #fff000; }
.red { stroke: #ff3000; }
.tree { stroke: #00f000; }

.viewcube {
    position: absolute;
    top: 15px;
    right: 15px;
    width: 134px;
    height: 134px;
}

.viewcube text { stroke: none; text-anchor: middle; font-family: "Liberation Sans", sans-serif; font-weight: bold; }
.ring { stroke: #2a2a2a; stroke-width: 12; }
.face { fill: #a9a9a9; stroke: #808080; }
.face-in { fill: #9b9ca2; stroke: none; }
.viewcube .top { font-family: "Open Sans", sans-serif; font-size: 12px; fill: #4a4b50; }
.compass text { font-size: 21px; fill: #a5a5a8; }

.wcs {
    position: absolute;
    top: 168px;
    right: 59px;
    width: 48px;
    height: 18px;
    display: flex;
    align-items: center;
    justify-content: center;
    gap: 4px;
    background: #8c8c92;
    border: 1px solid #6d6d72;
    border-radius: 4px;
    color: #4e4f55;
}

.wcs .caret { color: #b4b4b8; }

.navbar {
    position: absolute;
    top: 211px;
    right: 4px;
    width: 32px;
    height: 212px;
    background: #484848;
    border-radius: 3px;
}

.nav-dark { stroke: #2b2b2b; }
.nav-line { stroke: #5c5c5c; }

/* command line */
.command {
    display: flex;
    height: 68px;
    margin-top: 4px;
    background: #2e3440;
}

.cmd-side {
    width: 25px;
    display: flex;
    flex-direction: column;
    align-items: center;
    gap: 9px;
    padding-top: 6px;
}

.grip {
    width: 17px;
    height: 5px;
    background: repeating-linear-gradient(to right, #c8ccd2 0 2px, transparent 2px 3px);
}

.cmd-side svg { width: 10px; height: 10px; stroke-width: 2; display: block; }
.cmd-side button:last-child svg { width: 16px; height: 16px; }

.cmd-main { flex: 1; }

.history {
    height: 46px;
    padding: 2px 2px 0;
    background: #c8c8c8;
    color: #14161a;
    font-family: "Liberation Mono", monospace;
    font-size: 12px;
    line-height: 15px;
}

.prompt {
    display: flex;
    align-items: center;
    gap: 3px;
    height: 22px;
    padding-left: 4px;
    background: #fff;
    color: #4a4a4a;
    border-top: 1px solid #3c3c3c;
}

.prompt svg { width: 16px; height: 12px; stroke: #4a4a4a; }

.prompt input {
    flex: 1;
    height: 20px;
    padding-left: 3px;
    font-family: "Liberation Mono", monospace;
    font-size: 12px;
    font-style: italic;
}

.prompt input::placeholder { color: #6e6e6e; }

/* properties palette */
.palette {
    margin: 6px 0 6px 4px;
    border-radius: 4px;
    border-bottom: 1px solid #2f3541;
}

.palette-title {
    margin: 0;
    height: 21px;
    padding-left: 15px;
    background:
        repeating-linear-gradient(#9aa0aa 0 1px, transparent 1px 3px) 5px 6px / 4px 11px no-repeat,
        #2f3541;
    border-radius: 4px 4px 0 0;
    font-size: 11px;
    font-weight: normal;
    line-height: 18px;
}

.palette-tools {
    display: flex;
    align-items: center;
    gap: 8px;
    padding: 12px 10px 2px 5px;
}

.palette-tools .combo {
    flex: 1;
    height: 23px;
    padding-left: 3px;
}

.palette-tools .combo::after { right: 3px; }
.palette-tools svg { width: 16px; height: 16px; display: block; }

.props-list { padding: 0 18px 0 9px; }

.cat {
    width: 100%;
    height: 20px;
    display: flex;
    align-items: center;
    justify-content: space-between;
    padding: 0 7px;
    background: #2f3541;
    color: #fff;
    font-weight: bold;
}

.props-list table {
    width: calc(100% - 18px);
    margin: -1px 0 3px 18px;
    border-collapse: collapse;
    table-layout: fixed;
}

.props-list th, .props-list td {
    height: 19px;
    padding: 0 0 0 5px;
    border: 1px solid #2f3744;
    text-align: left;
    font-weight: normal;
    line-height: 16px;
    white-space: nowrap;
}

.props-list th { width: 122px; color: #c9cdd3; }
.props-list td { padding-left: 2px; }
.props-list .off { color: #878e9a; }

.props-list .line-sample {
    width: 66px;
    margin-right: 4px;
    vertical-align: middle;
}

.chip {
    display: inline-block;
    width: 14px;
    height: 14px;
    margin: 0 6px 0 1px;
    background: #fff;
    vertical-align: middle;
}

/* status bar */
.statusbar {
    display: flex;
    align-items: center;
    gap: 2px;
    height: 29px;
    padding: 0 2px 1px 0;
}

.layout-tabs {
    flex: 1;
    align-self: stretch;
    padding: 0 0 4px 16px;
}

.layout-tabs .tab { padding: 0 12px; }

.layout-tabs .tab.current {
    margin-left: 9px;
    padding: 0 17px;
}

.layout-tabs .current + .tab { padding-left: 7px; }
.layout-tabs .plus { margin-left: 14px; }

.status-group {
    display: flex;
    align-items: center;
    height: 24px;
    background: #3b4453;
}

.status-group button {
    width: 24px;
    height: 24px;
    display: flex;
    align-items: center;
    justify-content: center;
}

.status-group svg { width: 16px; height: 16px; }
.status-group .caret { margin: 0 4px; }
.status-group .on { background: #5c93c7; }
.status-group .wide { width: 49px; font-size: 12px; }
.status-group .scale { width: 20px; }
.status-group.spaced button { width: 28px; }
```
